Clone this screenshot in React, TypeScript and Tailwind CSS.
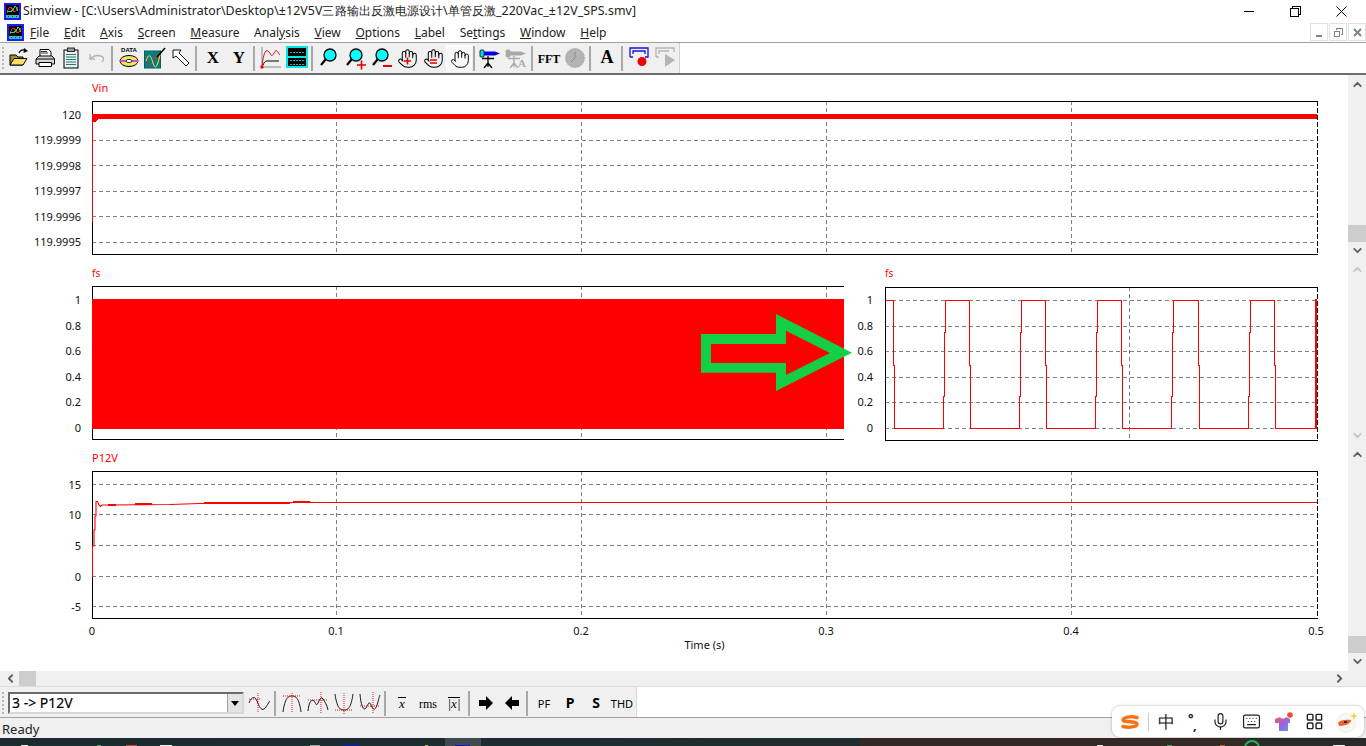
import type { ReactNode } from "react";
import { ChevronDown, ChevronLeft, ChevronRight, ChevronUp, Hand, Keyboard, LayoutGrid, Mic } from "lucide-react";

const GRID_X = [336.5, 581.5, 826.5, 1071.5];

const vinTicks: [number, string][] = [
  [114.5, "120"],
  [140, "119.9999"],
  [165.5, "119.9998"],
  [191, "119.9997"],
  [216.5, "119.9996"],
  [242, "119.9995"],
];
const fsTicks: [number, string][] = [
  [300, "1"],
  [326, "0.8"],
  [351, "0.6"],
  [377, "0.4"],
  [402, "0.2"],
  [428, "0"],
];
const p12Ticks: [number, string][] = [
  [484.5, "15"],
  [514.5, "10"],
  [545.5, "5"],
  [576.5, "0"],
  [606.5, "-5"],
];
const timeTicks: [number, string][] = [
  [92, "0"],
  [336, "0.1"],
  [581, "0.2"],
  [826, "0.3"],
  [1071, "0.4"],
  [1316, "0.5"],
];

const menus: [string, string, string][] = [
  ["", "F", "ile"],
  ["", "E", "dit"],
  ["", "A", "xis"],
  ["", "S", "creen"],
  ["", "M", "easure"],
  ["Anal", "y", "sis"],
  ["", "V", "iew"],
  ["", "O", "ptions"],
  ["", "L", "abel"],
  ["Se", "t", "tings"],
  ["", "W", "indow"],
  ["", "H", "elp"],
];

// the scope trace on the zoomed fs plot, five full pulses
function pulsePath() {
  const rises = [943, 1019, 1095, 1171, 1248];
  const falls = [969, 1045, 1121, 1198, 1274];
  let d = "M885.5 300.5H893V365H894V428.5";
  rises.forEach((r, i) => {
    d += `H${r}V396H${r + 1}V332H${r + 2}V300.5H${falls[i]}V365H${falls[i] + 1}V428.5`;
  });
  return d + "H1315";
}

function Tick({ y, top, right, label }: { y: number; top: number; right: string; label: string }) {
  return (
    <span className={`absolute ${right} text-[11px] leading-[14px] text-[#111]`} style={{ top: y - top - 7 }}>
      {label}
    </span>
  );
}

function Chart({
  left,
  top,
  width,
  height,
  ticks,
  gridX,
  children,
  openRight,
}: {
  left: number;
  top: number;
  width: number;
  height: number;
  ticks: [number, string][];
  gridX: number[];
  children: ReactNode;
  openRight?: boolean;
}) {
  const right = left + width;
  const bottom = top + height;
  return (
    <svg
      width={width}
      height={height}
      viewBox={`${left} ${top} ${width} ${height}`}
      shapeRendering="crispEdges"
      className="block shrink-0"
      fill="none"
    >
      <g stroke="#808080" strokeDasharray="4 3">
        {ticks.map(([y]) => (
          <line key={y} x1={left} x2={right} y1={Math.floor(y) + 0.5} y2={Math.floor(y) + 0.5} />
        ))}
        {gridX.map((x) => (
          <line key={x} x1={x} x2={x} y1={top} y2={bottom} />
        ))}
      </g>
      <g stroke="#000">
        <line x1={left} x2={right} y1={top + 0.5} y2={top + 0.5} />
        <line x1={left} x2={right} y1={bottom - 0.5} y2={bottom - 0.5} />
        <line x1={left + 0.5} x2={left + 0.5} y1={top} y2={bottom} />
        {!openRight && <line x1={right - 0.5} x2={right - 0.5} y1={top} y2={bottom} strokeDasharray="5 2" />}
      </g>
      {children}
    </svg>
  );
}

function ScrollStrip({ height, thumb, disabled }: { height: string; thumb?: boolean; disabled?: boolean }) {
  const color = disabled ? "text-[#c4c4c4]" : "text-[#606060]";
  return (
    <div className={`flex ${height} flex-col items-center py-[3px]`}>
      <ChevronUp size={13} strokeWidth={3.5} className={color} />
      <div className="flex-1" />
      {thumb && <div className="mb-[2px] h-[17px] w-full shrink-0 self-stretch bg-[#cdcdcd]" />}
      <ChevronDown size={13} strokeWidth={3.5} className={color} />
    </div>
  );
}

function AppIcon() {
  return (
    <svg width="17" height="17" viewBox="0 0 17 17" shapeRendering="crispEdges">
      <rect width="17" height="17" fill="#1c1cf0" />
      <rect x="2" y="2" width="13" height="10" fill="#000" />
      <rect x="2" y="12" width="13" height="3" fill="#2cc4b8" />
      <path d="M3 10C5 3 7 3 9 7S12 8 14 4" stroke="#f02030" fill="none" />
      <path d="M3 8C5 10 8 9 10 5S13 6 14 8" stroke="#20e050" fill="none" />
      <path d="M4 13h1v1H4zM8 13h1v1H8zM12 13h1v1h-1z" fill="#0a3aa0" />
    </svg>
  );
}

// toolbar glyphs drawn by the app in Times, kept as text in the bitmap-like button
function SerifGlyph({ text, size, width, italic, bold = true }: { text: string; size: number; width: number; italic?: boolean; bold?: boolean }) {
  return (
    <svg width={width} height="22" viewBox={`0 0 ${width} 22`}>
      <text
        x={width / 2}
        y="16"
        textAnchor="middle"
        fontFamily="Liberation Serif"
        fontWeight={bold ? 700 : 400}
        fontStyle={italic ? "italic" : "normal"}
        fontSize={size}
        fill="#000"
      >
        {text}
      </text>
    </svg>
  );
}

function Magnifier({ children }: { children?: ReactNode }) {
  return (
    <svg width="24" height="24" viewBox="0 0 24 24" fill="none">
      <circle cx="13" cy="9" r="6" fill="#00ffff" stroke="#000" strokeWidth="1.3" />
      <path d="M8.500 13.500L4 19" stroke="#000" strokeWidth="2.200" />
      {children}
    </svg>
  );
}

function HandBadge({ children }: { children: ReactNode }) {
  return (
    <span className="relative block h-[21px] w-[21px]">
      <Hand size={21} strokeWidth={1.15} className="text-black" />
      <svg className="absolute left-0 top-0" width="21" height="21" viewBox="0 0 21 21" fill="none" stroke="#e00000" strokeWidth="1.6">
        {children}
      </svg>
    </span>
  );
}

function Telescope({ muted }: { muted?: boolean }) {
  const body = muted ? "#a8a8a8" : "#0000e0";
  const tip = muted ? "#a8a8a8" : "#00e0e0";
  const leg = muted ? "#a8a8a8" : "#000";
  return (
    <svg width="24" height="24" viewBox="0 0 24 24" fill="none">
      <rect x="1" y="4" width="4" height="7" rx="1" fill={tip} stroke={leg} strokeWidth="0.8" />
      <path d="M5 5.500H16L21 7.500L16 9.500H5Z" fill={body} />
      <path d="M3 12.500H15M9 10V21M9 17L5 22M9 17L13 22" stroke={leg} strokeWidth="1.3" />
      {muted && (
        <text x="13" y="21" fontSize="11" fontFamily="Liberation Serif" fontWeight="700" fill="#a8a8a8">
          A
        </text>
      )}
    </svg>
  );
}

const tools: ReactNode[] = [
  <svg width="22" height="22" viewBox="0 0 22 22" fill="none">
    <path d="M2 18V8H8L10 10H15V18Z" fill="#a88a20" stroke="#000" />
    <path d="M2 18L6 11.500H19L15 18Z" fill="#f8e060" stroke="#000" />
    <path d="M11 6C12 3 15 2 18 3.500" stroke="#000" strokeWidth="1.2" />
    <path d="M16 1L20 4L15.500 6Z" fill="#000" />
  </svg>,
  <svg width="22" height="22" viewBox="0 0 22 22" fill="none" stroke="#000" strokeWidth="1">
    <path d="M6 9V2.500H15L17 5V9" fill="#fff" />
    <path d="M2 12L5 9H18L20.500 12V17H2Z" fill="#d8d8d8" />
    <path d="M2 12H20.500" />
    <path d="M5 15.500H17.500V19.500H5Z" fill="#fff" />
    <path d="M7 6H14M7 4.500H13" strokeWidth="0.8" />
  </svg>,
  <svg width="22" height="22" viewBox="0 0 22 22" fill="none">
    <rect x="4" y="3" width="14" height="18" fill="#e8f0f0" stroke="#000" />
    <rect x="7.500" y="1" width="7" height="3.500" fill="#a0a0a0" stroke="#000" strokeWidth="0.8" />
    <path d="M6 7.500H16M6 10H16M6 12.500H16M6 15H16M6 17.500H16" stroke="#207878" />
  </svg>,
  <svg width="22" height="22" viewBox="0 0 22 22" fill="none" stroke="#b4b4b4" strokeWidth="1.4">
    <path d="M4 7V12H9" />
    <path d="M4.500 11.500C8 8 12 8 16 9.500C18 10.500 18 13 16 15" />
  </svg>,
  "sep",
  <svg width="24" height="24" viewBox="0 0 24 24" fill="none">
    <text x="12" y="6" textAnchor="middle" fontSize="6" fontWeight="700" fontFamily="Liberation Sans" fill="#000">
      DATA
    </text>
    <ellipse cx="12" cy="15" rx="9" ry="5.500" fill="#f0e860" stroke="#000" />
    <path d="M3 15H9M15 15H21" stroke="#e040e0" strokeWidth="2" />
    <ellipse cx="12" cy="15" rx="3" ry="1.600" fill="#fff" stroke="#000" strokeWidth="0.8" />
  </svg>,
  <svg width="24" height="24" viewBox="0 0 24 24" fill="none">
    <rect x="1.500" y="5" width="16" height="17" fill="#008080" stroke="#006060" />
    <path d="M3 10C6 24 8 20 11 12S15 10 17 17" stroke="#f02020" />
    <path d="M3 15C6 6 8 10 10 17S14 22 17 9" stroke="#f0f040" />
    <path d="M14 11L22 2" stroke="#000" strokeWidth="1.6" />
  </svg>,
  <svg width="22" height="22" viewBox="0 0 22 22" fill="none" stroke="#000" strokeWidth="0.9">
    <path d="M3 3H11L9 6L19 16L16 19L6 9L3 11Z" fill="#fff" />
  </svg>,
  "sep",
  <SerifGlyph text="X" size={17} width={18} />,
  <SerifGlyph text="Y" size={17} width={18} />,
  "sep",
  <svg width="24" height="24" viewBox="0 0 24 24" fill="none">
    <path d="M3 1V21H22" stroke="#888" />
    <path d="M3 21C4 10 6 3 9 5S12 13 15 7S19 8 21 9" stroke="#e01010" />
    <path d="M4 19C6 14 8 15 11 15H20" stroke="#000" />
    <rect x="1.500" y="19.500" width="3" height="3" fill="#f00000" />
  </svg>,
  <svg width="24" height="24" viewBox="0 0 24 24" shapeRendering="crispEdges">
    <rect x="2" y="1" width="20" height="20" fill="#000" stroke="#00e8e8" strokeWidth="2" />
    <path d="M5 6H19M5 10H19M5 14H19M5 18H19" stroke="#00c0c0" strokeWidth="1" strokeDasharray="2 1" />
    <rect x="3" y="10" width="18" height="2" fill="#00e8e8" />
  </svg>,
  "sep",
  <Magnifier />,
  <Magnifier>
    <path d="M14 19H23M18.500 14.500V23.500" stroke="#e00000" strokeWidth="1.6" />
  </Magnifier>,
  <Magnifier>
    <path d="M14 20H23" stroke="#e00000" strokeWidth="2" />
  </Magnifier>,
  <HandBadge>
    <path d="M7 13H14M10.500 9.500V16.500" />
  </HandBadge>,
  <HandBadge>
    <path d="M7 12H14M7 15H14" />
  </HandBadge>,
  "pressed",
  "sep",
  <Telescope />,
  <Telescope muted />,
  "sep",
  <SerifGlyph text="FFT" size={12} width={24} />,
  <svg width="22" height="22" viewBox="0 0 22 22" fill="none">
    <circle cx="11" cy="11" r="9.500" fill="#b4b4b4" stroke="#9a9a9a" strokeDasharray="1 1" />
    <path d="M11 11V5M11 11L7 15" stroke="#8c8c8c" />
  </svg>,
  "sep",
  <SerifGlyph text="A" size={18} width={18} />,
  "sep",
  <svg width="24" height="24" viewBox="0 0 24 24" fill="none">
    <path d="M3 11V2H21V11H18M6 11H3M6 8V5H18V8" stroke="#1010e0" strokeWidth="1.3" />
    <circle cx="15" cy="15.500" r="4.500" fill="#f00000" />
  </svg>,
  <svg width="24" height="24" viewBox="0 0 24 24" fill="none">
    <path d="M3 11V2H21V6M6 11H3M6 8V5H16" stroke="#b4b4b4" strokeWidth="1.3" />
    <path d="M12 8L22 14L12 21Z" fill="#b4b4b4" />
  </svg>,
];

function Wave({ children }: { children: ReactNode }) {
  return (
    <svg width="24" height="24" viewBox="0 0 24 24" fill="none" strokeWidth="0.9">
      {children}
    </svg>
  );
}

const RED_DOTS = { stroke: "#f00000", strokeDasharray: "1 1" };

const bottomTools: ReactNode[] = [
  <Wave>
    <path d="M1 12C4 5 7 5 9 10S13 20 16 18S21 10 22 10" stroke="#000" />
    <path d="M10 2V22M1 8H12" {...RED_DOTS} />
  </Wave>,
  "sep",
  <Wave>
    <path d="M3 21C5 7 8 5 12 5S19 7 21 21" stroke="#000" />
    <path d="M12 2V22M3 5H21" {...RED_DOTS} />
  </Wave>,
  <Wave>
    <path d="M2 20C3 10 6 8 8 10S10 16 12 12S15 5 17 8S21 14 22 19" stroke="#000" />
    <path d="M15 1V22M2 9H22" {...RED_DOTS} />
  </Wave>,
  <Wave>
    <path d="M3 3C5 17 8 19 12 19S19 17 21 3" stroke="#000" />
    <path d="M12 2V23M3 19H21" {...RED_DOTS} />
  </Wave>,
  <Wave>
    <path d="M2 3C3 16 6 20 8 17S11 9 13 14S17 20 19 14S21 6 22 4" stroke="#000" />
    <path d="M15 1V22M2 15H22" {...RED_DOTS} />
  </Wave>,
  "sep",
  <span className="relative block h-[22px] w-[20px]">
    <SerifGlyph text="x" size={13} width={20} italic bold={false} />
    <span className="absolute left-[6px] top-[5px] h-[1px] w-[8px] bg-black" />
  </span>,
  <SerifGlyph text="rms" size={12} width={24} bold={false} />,
  <span className="relative block h-[22px] w-[20px]">
    <SerifGlyph text="|x|" size={13} width={20} italic bold={false} />
    <span className="absolute left-[4px] top-[5px] h-[1px] w-[12px] bg-black" />
  </span>,
  "sep",
  <svg width="18" height="16" viewBox="0 0 18 16">
    <path d="M2 5H9V1L16 8L9 15V11H2Z" fill="#000" />
  </svg>,
  <svg width="18" height="16" viewBox="0 0 18 16">
    <path d="M16 5H9V1L2 8L9 15V11H16Z" fill="#000" />
  </svg>,
  "sep",
  <span className="font-['Roboto',sans-serif] text-[11px] leading-none">PF</span>,
  <span className="text-[14px] font-bold leading-none">P</span>,
  <span className="text-[14px] font-bold leading-none">S</span>,
  <span className="font-['Roboto',sans-serif] text-[11px] leading-none">THD</span>,
];

function ToolRow({ items }: { items: ReactNode[] }) {
  return (
    <>
      {items.map((item, i) =>
        item === "sep" ? (
          <div key={i} className="mx-[1px] h-[25px] w-[4px] shrink-0 border-l-2 border-[#a8a8a8] pl-[1px]" />
        ) : item === "pressed" ? (
          <div
            key={i}
            className="flex h-[27px] w-[26px] shrink-0 items-center justify-center border-l border-t border-[#fff] bg-[#f8f8f8]"
          >
            <Hand size={20} strokeWidth={1.15} className="text-black" />
          </div>
        ) : (
          <div key={i} className="flex h-[26px] w-[26px] shrink-0 items-center justify-center text-black">
            {item}
          </div>
        ),
      )}
    </>
  );
}

function Grip() {
  return <div className="mr-[1px] h-[22px] w-[3px] shrink-0 border-l-2 border-dotted border-[#b8b8b8]" />;
}

export default function App() {
  return (
    <div className="relative flex h-[746px] w-[1366px] flex-col overflow-hidden bg-white font-['Liberation_Sans',sans-serif] text-black">
      {/* title bar */}
      <div className="flex h-[22px] shrink-0 items-center pl-[4px] font-['Open_Sans','Noto_Sans_CJK_SC',sans-serif] text-[12.4px]">
        <AppIcon />
        <span className="ml-[2px] mt-[1px] whitespace-nowrap tracking-[0.06px] text-[#222]">
          Simview - [C:\Users\Administrator\Desktop\±12V5V三路输出反激电源设计\单管反激_220Vac_±12V_SPS.smv]
        </span>
        <div className="ml-auto flex items-center pr-[2px]">
          <div className="flex w-[46px] justify-center">
            <div className="h-[1px] w-[10px] bg-black" />
          </div>
          <div className="flex w-[46px] justify-center">
            <svg width="11" height="11" viewBox="0 0 11 11" fill="none" stroke="#000" shapeRendering="crispEdges">
              <rect x="0.5" y="2.5" width="8" height="8" />
              <path d="M2.5 2.5V0.5H10.5V8.5H8.5" />
            </svg>
          </div>
          <div className="flex w-[46px] justify-center">
            <svg width="11" height="11" viewBox="0 0 11 11" stroke="#000">
              <path d="M0.5 0.5L10.5 10.5M10.5 0.5L0.5 10.5" />
            </svg>
          </div>
        </div>
      </div>

      {/* menu bar */}
      <div className="flex h-[21px] shrink-0 items-center border-b border-[#a0a0a0] pl-[7px] font-['Open_Sans',sans-serif] text-[12px] text-[#222]">
        <AppIcon />
        <div className="ml-[6px] mt-[1px] flex gap-[14.7px] whitespace-nowrap">
          {menus.map(([before, key, after]) => (
            <span key={key + after}>
              {before}
              <span className="underline">{key}</span>
              {after}
            </span>
          ))}
        </div>
        <div className="ml-auto flex gap-[1px]">
          <div className="flex h-[18px] w-[18px] items-end justify-center border border-[#e2e2e2] pb-[3px]">
            <div className="h-[2px] w-[6px] bg-[#7a8590]" />
          </div>
          <div className="flex h-[18px] w-[18px] items-center justify-center border border-[#e2e2e2]">
            <svg width="9" height="9" viewBox="0 0 9 9" fill="none" stroke="#7a8590" shapeRendering="crispEdges">
              <rect x="0.5" y="3.5" width="5" height="5" />
              <path d="M2.5 2V0.5H8.5V6H6.5" />
            </svg>
          </div>
          <div className="flex h-[18px] w-[18px] items-center justify-center border border-[#e2e2e2]">
            <svg width="9" height="9" viewBox="0 0 9 9" stroke="#7a8590" strokeWidth="2">
              <path d="M1 1L8 8M8 1L1 8" />
            </svg>
          </div>
        </div>
      </div>

      {/* main toolbar */}
      <div className="flex h-[32px] shrink-0 border-b-2 border-[#6e6e6e]">
        <div className="flex h-[30px] items-center border-r border-[#d0d0d0] bg-[#f0f0f0] pl-[2px] pr-[1px]">
          <Grip />
          <ToolRow items={tools} />
        </div>
      </div>

      {/* plots and their scroll strip */}
      <div className="relative flex h-[596px] shrink-0">
        <div className="flex w-[1348px] shrink-0 flex-col">
          <div className="h-[185px] shrink-0">
            <div className="flex h-[26px] items-center pl-[92px] text-[11px] text-[#ff0000]">Vin</div>
            <div className="flex">
              <div className="relative h-[154px] w-[92px] shrink-0">
                {vinTicks.map(([y, label]) => (
                  <Tick key={label} y={y} top={101} right="right-[11px]" label={label} />
                ))}
              </div>
              <Chart left={92} top={101} width={1226} height={154} ticks={vinTicks.slice(1)} gridX={GRID_X}>
                <rect x="92" y="114" width="1225" height="5" fill="#ff0000" />
                <path d="M92 114H97V119L99 119L97 120.500L96 122H93V222H92Z" fill="#ff0000" />
              </Chart>
            </div>
          </div>

          <div className="h-[185px] shrink-0">
            <div className="flex h-[26px]">
              <div className="flex w-[885px] items-center pl-[92px] text-[10px] text-[#ff0000]">fs</div>
              <div className="flex items-center text-[10px] text-[#ff0000]">fs</div>
            </div>
            <div className="flex">
              <div className="relative h-[154px] w-[92px] shrink-0">
                {fsTicks.map(([y, label]) => (
                  <Tick key={label} y={y} top={286} right="right-[11px]" label={label} />
                ))}
              </div>
              <Chart left={92} top={286} width={752} height={154} ticks={fsTicks} gridX={GRID_X.slice(0, 3)} openRight>
                <rect x="92" y="299" width="752" height="130" fill="#ff0000" />
              </Chart>
              <div className="relative h-[154px] w-[41px] shrink-0">
                {fsTicks.map(([y, label]) => (
                  <Tick key={label} y={y} top={286} right="right-[12px]" label={label} />
                ))}
              </div>
              <div className="mt-[1px]">
                <Chart left={885} top={287} width={433} height={154} ticks={fsTicks} gridX={[1129.5]}>
                  <path d={pulsePath()} stroke="#ff0000" />
                  <rect x="1315" y="299" width="2" height="130" fill="#ff0000" />
                </Chart>
              </div>
            </div>
          </div>

          <div className="h-[226px] shrink-0">
            <div className="flex h-[26px] items-center pl-[92px] text-[11px] text-[#ff0000]">P12V</div>
            <div className="flex">
              <div className="relative h-[148px] w-[92px] shrink-0">
                {p12Ticks.map(([y, label]) => (
                  <Tick key={label} y={y} top={471} right="right-[11px]" label={label} />
                ))}
              </div>
              <Chart left={92} top={471} width={1226} height={148} ticks={p12Ticks} gridX={GRID_X}>
                <path
                  d="M92.500 577V546H94V530H95V516H96V501.500H97.500L99 505L100.500 506.500L102 505L110 505L170 504.500L200 503.500L300 502.500H1317"
                  stroke="#ff0000"
                  strokeWidth="1.1"
                  shapeRendering="auto"
                />
                <path d="M108 505H116M135 504H152M204 503H290M293 502H310" stroke="#ff0000" strokeWidth="2" />
              </Chart>
            </div>
            <div className="relative h-[14px] w-full">
              {timeTicks.map(([x, label]) => (
                <span
                  key={label}
                  className="absolute top-[5px] -translate-x-1/2 text-[11px] leading-[14px] text-[#111]"
                  style={{ left: x }}
                >
                  {label}
                </span>
              ))}
            </div>
            <div className="ml-[92px] mt-[5px] w-[1225px] text-center text-[11px] leading-[14px] text-[#111]">Time (s)</div>
          </div>
        </div>

        <div className="flex w-[18px] flex-col bg-[#f0f0f0]">
          <ScrollStrip height="h-[185px]" thumb />
          <ScrollStrip height="h-[185px]" disabled />
          <ScrollStrip height="h-[226px]" thumb />
        </div>

        {/* green annotation arrow pasted over the plots */}
        <svg className="absolute left-[700px] top-[238px]" width="154" height="80" viewBox="700 313 154 80">
          <path
            fillRule="evenodd"
            fill="#13cf45"
            d="M701 334H776V314L852 352.700L776 391V372.700H701ZM711 344V363H786V375L830 353L786 330.700V344Z"
          />
        </svg>
      </div>

      {/* horizontal scroll bar */}
      <div className="flex h-[16px] shrink-0 items-center border-b border-[#dcdcdc] bg-[#f0f0f0] pl-[4px] pr-[20px]">
        <ChevronLeft size={13} strokeWidth={3.5} className="text-[#606060]" />
        <div className="ml-[2px] h-[15px] w-[17px] bg-[#cdcdcd]" />
        <ChevronRight size={13} strokeWidth={3.5} className="ml-auto text-[#606060]" />
      </div>

      {/* measure toolbar */}
      <div className="flex h-[31px] shrink-0 border-b border-[#a0a0a0]">
        <div className="flex items-center border-r border-[#d8d8d8] bg-[#f0f0f0] pl-[2px] pr-[1px] pt-[2px]">
          <Grip />
          <div className="ml-[2px] flex h-[22px] w-[236px] shrink-0 items-center border-2 border-[#d8d8d8] border-l-[#6a6a6a] border-t-[#6a6a6a] bg-white">
            <span className="flex-1 pl-[2px] text-[14px] leading-none [-webkit-text-stroke:0.15px_black]">3 -&gt; P12V</span>
            <div className="flex h-full w-[15px] items-center justify-center border-l border-[#a0a0a0] bg-[#e4e4e4]">
              <svg width="8" height="5" viewBox="0 0 8 5">
                <path d="M0 0H8L4 5Z" fill="#000" />
              </svg>
            </div>
          </div>
          <div className="ml-[3px] flex items-center">
            <ToolRow items={bottomTools} />
          </div>
        </div>
      </div>

      {/* status bar */}
      <div className="flex h-[20px] shrink-0 items-center bg-[#f0f0f0] pl-[2px] pt-[3px] font-['Open_Sans',sans-serif] text-[13px] text-[#222]">
        Ready
      </div>

      {/* slice of the desktop taskbar */}
      <div className="h-[8px] shrink-0 bg-gradient-to-r from-[#1b2b30] via-[#1e2c30] to-[#2a2a2a]">
        <svg width="1366" height="8" viewBox="0 0 1366 8" shapeRendering="crispEdges" className="block">
          <rect x="445" width="36" height="8" fill="#3f4a50" />
          <rect x="860" width="400" height="8" fill="#3a2a22" opacity="0.7" />
          <rect x="21" y="7" width="7" height="1" fill="#e8e8e8" />
          <rect x="97" y="7" width="4" height="1" fill="#60a060" />
          <rect x="126" y="7" width="11" height="1" fill="#e04040" />
          <rect x="160" y="7" width="12" height="1" fill="#f0f0f0" />
          <rect x="310" y="7" width="10" height="1" fill="#a0a0a0" />
          <rect x="343" y="7" width="17" height="1" fill="#1010e0" />
          <rect x="425" y="7" width="3" height="1" fill="#d0c040" />
          <rect x="455" y="7" width="15" height="1" fill="#1010e0" />
          <rect x="1097" y="7" width="6" height="1" fill="#e0e0e0" />
          <rect x="1167" y="7" width="5" height="1" fill="#40a060" />
          <rect x="1220" y="7" width="5" height="1" fill="#d05030" />
          <rect x="1333" y="7" width="12" height="1" fill="#f0f0f0" />
          <circle cx="1252" cy="10" r="7" fill="none" stroke="#10c060" strokeWidth="2" shapeRendering="auto" />
        </svg>
      </div>

      {/* input method floating bar */}
      <div className="absolute left-[1112px] top-[706px] flex h-[31px] w-[252px] items-center rounded-lg bg-white pl-[8px] shadow-[0_0_3px_rgba(0,0,0,0.3)]">
        <svg width="20" height="16" viewBox="0 0 20 16" fill="none" stroke="#f97316" strokeWidth="3.4" strokeLinecap="round">
          <path d="M17 3.500C11 2 3 3 3 6C3 8.500 17 7 17 10C17 13 9 14 3 12.500" />
        </svg>
        <div className="ml-[8px] h-[18px] w-[1px] bg-[#c8c8c8]" />
        <span className="ml-[9px] font-['Noto_Sans_CJK_SC',sans-serif] text-[17px] leading-none text-[#222]">中</span>
        <span className="ml-[13px] flex w-[12px] flex-col text-[13px] font-bold leading-[7px] text-[#222]">
          <span>°</span>
          <span className="pl-[5px]">,</span>
        </span>
        <Mic size={19} strokeWidth={1.5} className="ml-[11px] text-[#222]" />
        <Keyboard size={19} strokeWidth={1.5} className="ml-[12px] text-[#222]" />
        <svg className="ml-[13px]" width="20" height="20" viewBox="0 0 20 20">
          <defs>
            <linearGradient id="shirt" x1="0" y1="0" x2="1" y2="1">
              <stop offset="0" stopColor="#f4604a" />
              <stop offset="0.5" stopColor="#a060e0" />
              <stop offset="1" stopColor="#50a0ff" />
            </linearGradient>
          </defs>
          <path d="M1 7L6 5C7 7 11 7 12 5L16 7V11H14V19H5V11H1Z" fill="url(#shirt)" />
          <circle cx="16" cy="3" r="2.800" fill="#f04a30" />
        </svg>
        <LayoutGrid size={19} strokeWidth={1.8} className="ml-[11px] text-[#222]" />
        <svg className="ml-[12px]" width="22" height="22" viewBox="0 0 22 22">
          <circle cx="10" cy="12" r="9.500" fill="#faf6f2" stroke="#eee" />
          <path d="M2 12C3 9 12 8 15 9C16 12 9 15 3 15Z" fill="#e8622c" />
          <rect x="8" y="10" width="3" height="2" fill="#3a2a20" />
          <path d="M18 1L19 4L22 5L19 6L18 9L17 6L14 5L17 4Z" fill="#f8d040" />
        </svg>
      </div>
    </div>
  );
}
